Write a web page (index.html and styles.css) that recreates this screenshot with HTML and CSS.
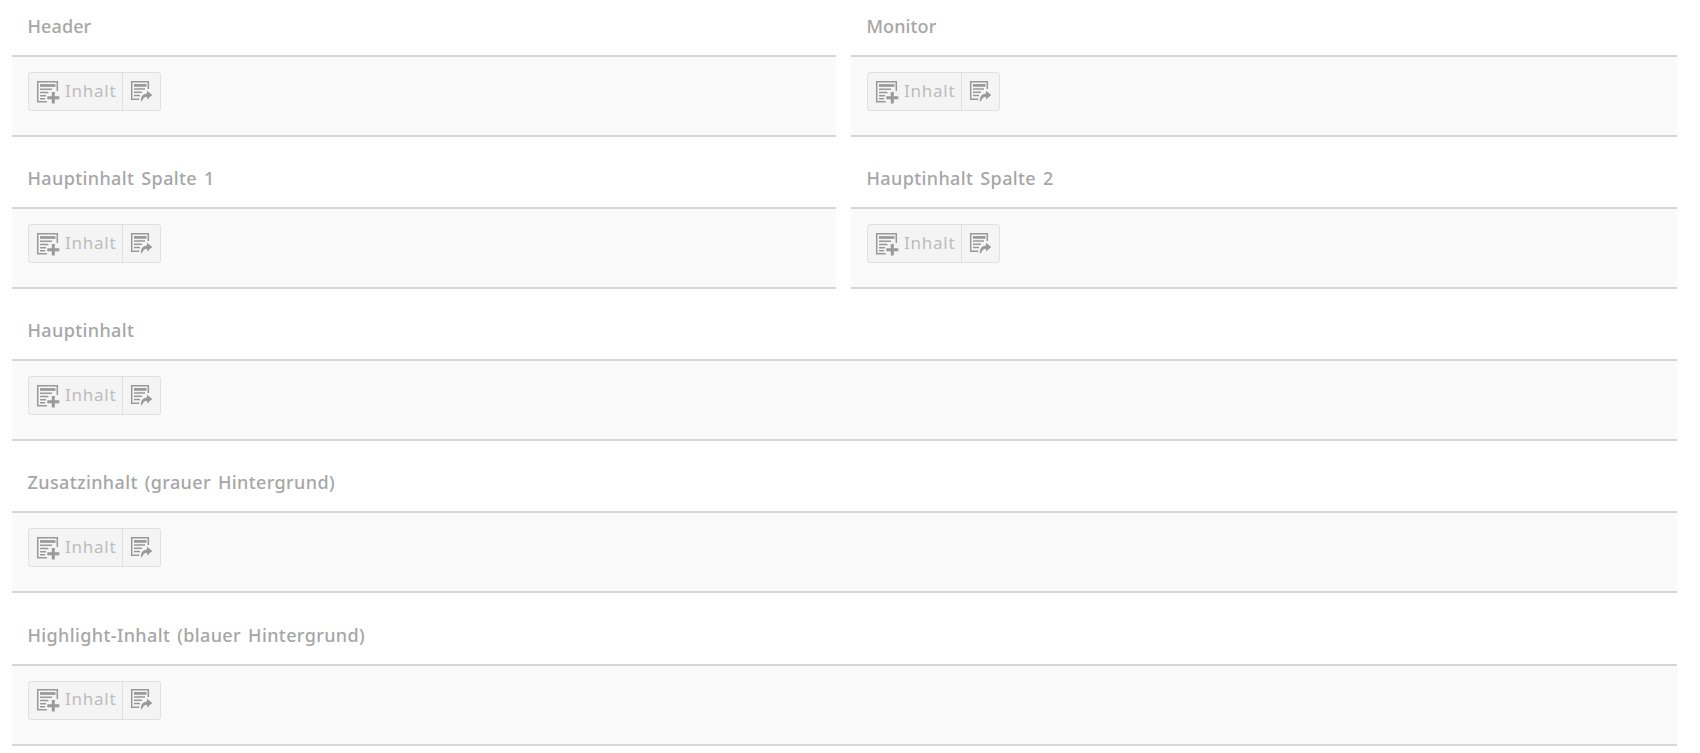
FILE: index.html
```html
<!DOCTYPE html>
<html lang="de">
<head>
<meta charset="utf-8">
<title>Seiteninhalt</title>
<link rel="stylesheet" href="styles.css">
</head>
<body>
<svg class="defs" width="0" height="0" aria-hidden="true">
  <symbol id="add" viewBox="0 0 24 24">
    <path class="line" d="M21.3 11V1.7H1.7v20.1h9.1"/>
    <path class="bar" d="M4 5.5h15.5"/>
    <path class="line" d="M4 9.3h12M4 12.5h8.5M4 15.7h6M4 18.8h5"/>
    <path class="plus" d="M17.3 12v11.5M11.3 17.8h12"/>
  </symbol>
  <symbol id="ref" viewBox="0 0 24 24">
    <path class="line" d="M18.3 9V1.7H1.7v17.6h7.6"/>
    <path class="bar" d="M4 5.4h12.5"/>
    <path class="line" d="M4 9h11M4 12.2h8M4 15.4h6"/>
    <path class="arrow" d="M17 10.8l5.3 4.2-5.3 4.4v-2.6q-3.8.2-5 4.4h-1.2q-.4-7.2 6.2-7.8z"/>
  </symbol>
</svg>
<main class="grid">
  <section class="cell"><h2 class="title short">Header</h2><div class="body"><div class="group"><button class="btn main"><svg class="icon"><use href="#add"/></svg><span class="label">Inhalt</span></button><button class="btn"><svg class="icon"><use href="#ref"/></svg></button></div></div></section>
  <section class="cell"><h2 class="title short">Monitor</h2><div class="body"><div class="group"><button class="btn main"><svg class="icon"><use href="#add"/></svg><span class="label">Inhalt</span></button><button class="btn"><svg class="icon"><use href="#ref"/></svg></button></div></div></section>
  <section class="cell"><h2 class="title">Hauptinhalt Spalte 1</h2><div class="body"><div class="group"><button class="btn main"><svg class="icon"><use href="#add"/></svg><span class="label">Inhalt</span></button><button class="btn"><svg class="icon"><use href="#ref"/></svg></button></div></div></section>
  <section class="cell"><h2 class="title">Hauptinhalt Spalte 2</h2><div class="body"><div class="group"><button class="btn main"><svg class="icon"><use href="#add"/></svg><span class="label">Inhalt</span></button><button class="btn"><svg class="icon"><use href="#ref"/></svg></button></div></div></section>
  <section class="cell wide"><h2 class="title">Hauptinhalt</h2><div class="body"><div class="group"><button class="btn main"><svg class="icon"><use href="#add"/></svg><span class="label">Inhalt</span></button><button class="btn"><svg class="icon"><use href="#ref"/></svg></button></div></div></section>
  <section class="cell wide"><h2 class="title">Zusatzinhalt (grauer Hintergrund)</h2><div class="body"><div class="group"><button class="btn main"><svg class="icon"><use href="#add"/></svg><span class="label">Inhalt</span></button><button class="btn"><svg class="icon"><use href="#ref"/></svg></button></div></div></section>
  <section class="cell wide"><h2 class="title">Highlight-Inhalt (blauer Hintergrund)</h2><div class="body"><div class="group"><button class="btn main"><svg class="icon"><use href="#add"/></svg><span class="label">Inhalt</span></button><button class="btn"><svg class="icon"><use href="#ref"/></svg></button></div></div></section>
</main>
</body>
</html>
```
FILE: styles.css
```css
* { box-sizing: border-box; }
body { margin: 0; background: #fff; overflow: hidden; font-family: "Noto Sans", sans-serif; }
.defs { display: block; }
.grid { display: grid; grid-template-columns: 824px 826px; column-gap: 15px; grid-auto-rows: 152.15px; padding: 0 0 0 12px; margin-top: -15px; }
.cell { display: flex; flex-direction: column; }
.wide { grid-column: 1 / -1; }
.title { margin: 0; height: 70px; padding: 28px 15.5px 0; font-size: 18px; line-height: 26px; font-weight: 500; color: #a6a6a6; letter-spacing: .38px; word-spacing: 2px; }
.short { letter-spacing: .1px; }
.body { height: 82px; padding: 15px 16px; background: #fafafa; border-top: 2px solid #d6d6d6; border-bottom: 2px solid #d6d6d6; }
.group { display: inline-flex; height: 39px; border: 1px solid #e0e0e0; border-radius: 3px; background: #f4f4f4; }
.btn { width: 37px; height: 37px; display: flex; align-items: center; gap: 5px; padding: 0 0 0 7px; border: 0; background: none; color: #bcbcbc; font: 400 17px/24px "Noto Sans", sans-serif; letter-spacing: .75px; }
.main { width: 94px; border-right: 1px solid #e0e0e0; }
.label { padding-bottom: 2px; }
.icon { width: 24px; height: 24px; flex: none; fill: none; stroke: #999; }
.line { stroke-width: 1.5; }
.bar { stroke-width: 2.7; }
.plus { stroke-width: 3; }
.arrow { fill: #999; stroke: none; }
```
